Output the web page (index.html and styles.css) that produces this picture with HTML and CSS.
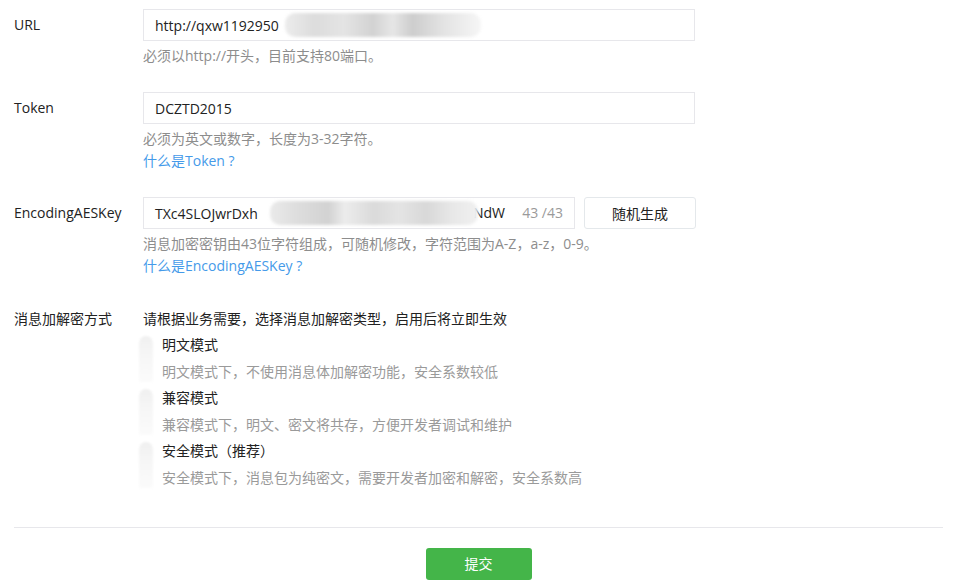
FILE: index.html
```html
<!DOCTYPE html>
<html lang="zh-CN">
<head>
<meta charset="utf-8">
<title>服务器配置</title>
<link rel="stylesheet" href="styles.css">
</head>
<body>
<div class="page">
  <div class="row row-url">
    <div class="label">URL</div>
    <div class="field">
      <div class="input wide">
        <span class="val">http://qxw1192950</span>
        <span class="smudge smudge-url"></span>
      </div>
      <div class="hint">必须以http://开头，目前支持80端口。</div>
    </div>
  </div>

  <div class="row row-token">
    <div class="label">Token</div>
    <div class="field">
      <div class="input wide"><span class="val">DCZTD2015</span></div>
      <div class="hint">必须为英文或数字，长度为3-32字符。</div>
      <a class="link" href="#">什么是Token ?</a>
    </div>
  </div>

  <div class="row row-aes">
    <div class="label">EncodingAESKey</div>
    <div class="field">
      <div class="aes-line">
        <div class="input aes">
          <span class="val">TXc4SLOJwrDxh</span>
          <span class="val tail">NdW</span>
          <span class="counter">43 /43</span>
          <span class="smudge smudge-aes"></span>
        </div>
        <button class="btn-gen" type="button">随机生成</button>
      </div>
      <div class="hint">消息加密密钥由43位字符组成，可随机修改，字符范围为A-Z，a-z，0-9。</div>
      <a class="link" href="#">什么是EncodingAESKey ?</a>
    </div>
  </div>

  <div class="row row-mode">
    <div class="label label-mode">消息加解密方式</div>
    <div class="field">
      <div class="intro">请根据业务需要，选择消息加解密类型，启用后将立即生效</div>
      <div class="option">
        <span class="radio-smudge"></span>
        <div class="opt-title">明文模式</div>
        <div class="opt-desc">明文模式下，不使用消息体加解密功能，安全系数较低</div>
      </div>
      <div class="option">
        <span class="radio-smudge"></span>
        <div class="opt-title">兼容模式</div>
        <div class="opt-desc">兼容模式下，明文、密文将共存，方便开发者调试和维护</div>
      </div>
      <div class="option">
        <span class="radio-smudge"></span>
        <div class="opt-title">安全模式（推荐）</div>
        <div class="opt-desc">安全模式下，消息包为纯密文，需要开发者加密和解密，安全系数高</div>
      </div>
    </div>
  </div>

  <div class="footer">
    <button class="btn-submit" type="button">提交</button>
  </div>
</div>
</body>
</html>
```

FILE: styles.css
```css
* { box-sizing: border-box; }
html, body { margin: 0; padding: 0; background: #fff; }
body {
  font-family: "Open Sans", "Noto Sans CJK SC", sans-serif;
  font-size: 14px;
  color: #222;
}
.page {
  width: 929px;
  margin-left: 14px;
  padding-top: 9px;
}
.row {
  display: flex;
  align-items: flex-start;
}
.row-token { margin-top: 25px; }
.row-aes { margin-top: 25px; }
.row-mode { margin-top: 32px; }
.label {
  width: 129px;
  flex: none;
  line-height: 31px;
  height: 32px;
}
.label-mode { line-height: 20px; height: 20px; }
.field { flex: 1; display: flex; flex-direction: column; align-items: flex-start; }
.input {
  position: relative;
  height: 32px;
  border: 1px solid #e7e7eb;
  padding: 0 11px;
  display: flex;
  align-items: center;
  white-space: nowrap;
  overflow: hidden;
  background: #fff;
  line-height: 29px;
}
.input.wide { width: 552px; }
.input.aes { width: 432px; }
.val { color: #222; }
.tail { position: absolute; right: 69px; top: 0; line-height: 29px; }
.counter {
  position: absolute;
  right: 11px;
  top: 0;
  line-height: 29px;
  color: #9a9a9a;
}
.smudge {
  position: absolute;
  top: 3px;
  height: 24px;
  border-radius: 10px;
  filter: blur(1.5px);
}
.smudge-url {
  left: 141px;
  width: 196px;
  background: linear-gradient(90deg, #ececec 0%, #dcdcdc 15%, #e4e4e4 30%, #d2d2d2 45%, #e6e6e6 55%, #cdcdcd 65%, #e2e2e2 80%, #eeeeee 92%, #f6f6f6 100%);
}
.smudge-aes {
  left: 126px;
  width: 208px;
  background: linear-gradient(90deg, #eaeaea 0%, #dedede 12%, #d2d2d2 28%, #ececec 36%, #dadada 50%, #e4e4e4 62%, #d8d8d8 75%, #e8e8e8 88%, #f0f0f0 100%);
}
.aes-line { display: flex; gap: 9px; }
.btn-gen {
  width: 112px;
  height: 32px;
  border: 1px solid #e4e8eb;
  border-radius: 3px;
  background: #fff;
  color: #222;
  font: inherit;
  line-height: 29px;
  padding: 0;
}
.hint {
  margin-top: 4px;
  line-height: 22px;
  color: #8d8d8d;
}
.link {
  line-height: 22px;
  color: #459ae9;
  text-decoration: none;
}
.intro { line-height: 20px; margin-bottom: 3px; }
.option {
  position: relative;
  padding-left: 19px;
}
.opt-title { line-height: 26px; color: #222; }
.opt-desc { line-height: 27px; color: #9a9a9a; }
.radio-smudge {
  position: absolute;
  left: -4px;
  top: 4px;
  width: 14px;
  height: 46px;
  border-radius: 7px 7px 2px 2px;
  background: linear-gradient(180deg, #f0f0f0 0%, #f6f6f6 40%, #fbfbfb 100%);
  filter: blur(1px);
}
.footer {
  margin-top: 36px;
  border-top: 1px solid #e7e7eb;
  padding-top: 20px;
  display: flex;
  justify-content: center;
}
.btn-submit {
  width: 106px;
  height: 32px;
  border: 0;
  border-radius: 3px;
  background: #44b549;
  color: #fff;
  font: inherit;
  line-height: 30px;
  padding: 0;
}
```
